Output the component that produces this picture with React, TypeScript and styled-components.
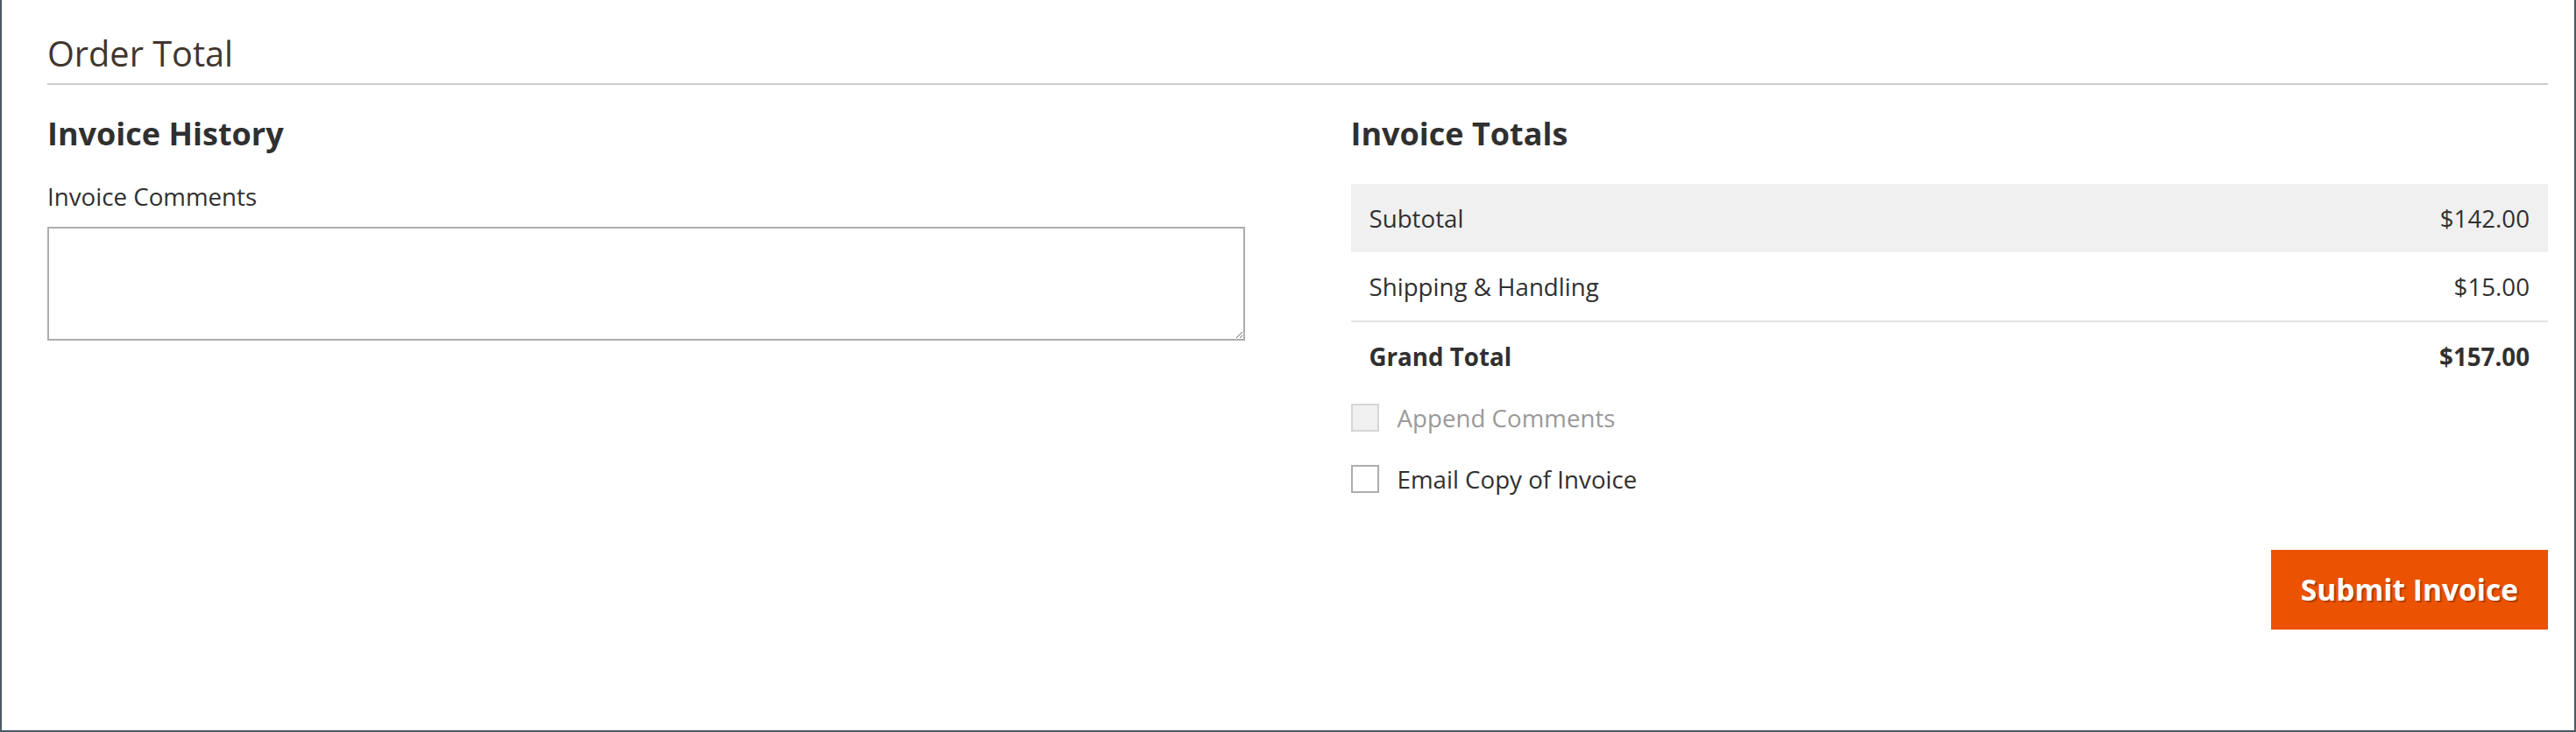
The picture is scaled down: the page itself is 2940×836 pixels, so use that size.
import React from "react";
import styled, { createGlobalStyle } from "styled-components";

const GlobalStyle = createGlobalStyle`
  html, body { margin: 0; padding: 0; background: #ffffff; }
  body { font-family: "Open Sans", "Noto Sans", "Liberation Sans", sans-serif; color: #303030; }
  * { box-sizing: border-box; }
`;

const Frame = styled.div`
  width: 2940px;
  height: 836px;
  border-left: 2px solid #4a5b66;
  border-right: 2px solid #4a5b66;
  border-bottom: 2px solid #4a5b66;
  padding: 0 30px 0 52px;
  background: #ffffff;
`;

const SectionTitle = styled.h2`
  margin: 0;
  padding: 38px 0 10px;
  font-size: 39.7px;
  line-height: 47px;
  font-weight: 400;
  color: #41362f;
  border-bottom: 2px solid #cccccc;
`;

const Columns = styled.div`
  display: grid;
  grid-template-columns: 1fr 1fr;
  column-gap: 121px;
`;

const Column = styled.div`
  display: flex;
  flex-direction: column;
  min-width: 0;
`;

const ItemTitle = styled.h3`
  margin: 35px 0 0;
  font-size: 36px;
  line-height: 42.6px;
  font-weight: 700;
  color: #303030;
`;

const FieldLabel = styled.label`
  display: block;
  margin-top: 30px;
  font-size: 27.7px;
  line-height: 38px;
  color: #303030;
`;

const CommentArea = styled.textarea`
  display: block;
  margin-top: 16px;
  width: 100%;
  height: 130px;
  border: 2px solid #adadad;
  border-radius: 0;
  background: #ffffff;
  resize: vertical;
  font-family: inherit;
  font-size: 27px;
  padding: 8px 12px;
  outline: none;
`;

const TotalsTable = styled.div`
  margin-top: 35px;
  display: flex;
  flex-direction: column;
`;

const TotalRow = styled.div<{ $shaded?: boolean; $strong?: boolean; $divided?: boolean }>`
  display: flex;
  justify-content: space-between;
  align-items: center;
  padding: 20px 21px;
  font-size: 27.7px;
  line-height: 38px;
  color: #303030;
  font-weight: ${(p) => (p.$strong ? 700 : 400)};
  background: ${(p) => (p.$shaded ? "#f0f0f0" : "transparent")};
  border-top: ${(p) => (p.$divided ? "2px solid #e3e3e3" : "none")};
`;

const Options = styled.div`
  margin-top: 12px;
  display: flex;
  flex-direction: column;
  gap: 32px;
`;

const CheckRow = styled.label<{ $disabled?: boolean }>`
  display: flex;
  align-items: center;
  gap: 21px;
  font-size: 27.7px;
  line-height: 38px;
  color: ${(p) => (p.$disabled ? "#9a9a9a" : "#303030")};
`;

const Box = styled.span<{ $disabled?: boolean }>`
  display: inline-block;
  width: 32px;
  height: 32px;
  border: 2px solid ${(p) => (p.$disabled ? "#d6d6d6" : "#adadad")};
  background: ${(p) => (p.$disabled ? "#f0f0f0" : "#ffffff")};
`;

const Actions = styled.div`
  margin-top: 62px;
  display: flex;
  justify-content: flex-end;
`;

const PrimaryButton = styled.button`
  height: 91px;
  padding: 0 34px;
  border: none;
  border-radius: 0;
  background: #eb5202;
  color: #ffffff;
  font-family: inherit;
  font-size: 33.5px;
  font-weight: 700;
  text-shadow: 2px 2px 0 rgba(0, 0, 0, 0.25);
  cursor: pointer;
`;

export default function App() {
  return (
    <>
      <GlobalStyle />
      <Frame>
        <SectionTitle>Order Total</SectionTitle>
        <Columns>
          <Column>
            <ItemTitle>Invoice History</ItemTitle>
            <FieldLabel htmlFor="invoice-comments">Invoice Comments</FieldLabel>
            <CommentArea id="invoice-comments" />
          </Column>
          <Column>
            <ItemTitle>Invoice Totals</ItemTitle>
            <TotalsTable>
              <TotalRow $shaded>
                <span>Subtotal</span>
                <span>$142.00</span>
              </TotalRow>
              <TotalRow>
                <span>Shipping &amp; Handling</span>
                <span>$15.00</span>
              </TotalRow>
              <TotalRow $strong $divided>
                <span>Grand Total</span>
                <span>$157.00</span>
              </TotalRow>
            </TotalsTable>
            <Options>
              <CheckRow $disabled>
                <Box $disabled />
                Append Comments
              </CheckRow>
              <CheckRow>
                <Box />
                Email Copy of Invoice
              </CheckRow>
            </Options>
            <Actions>
              <PrimaryButton type="button">Submit Invoice</PrimaryButton>
            </Actions>
          </Column>
        </Columns>
      </Frame>
    </>
  );
}
